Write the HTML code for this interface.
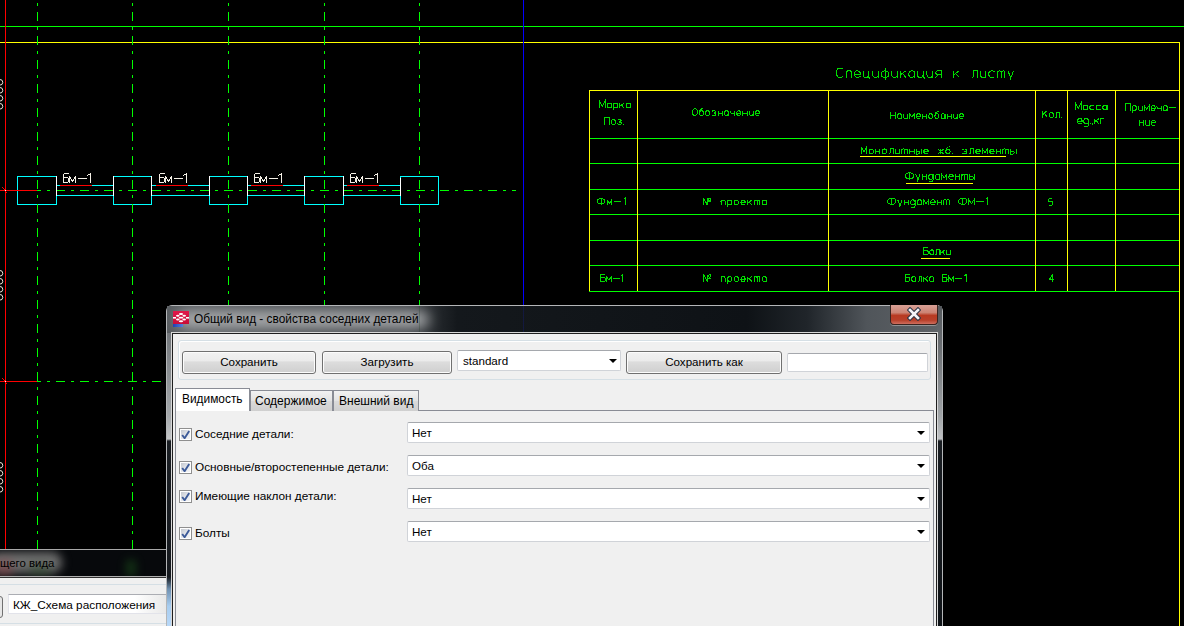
<!DOCTYPE html>
<html><head><meta charset="utf-8"><style>
html,body{margin:0;padding:0}
body{width:1184px;height:626px;background:#000;position:relative;overflow:hidden;font-family:"Liberation Sans",sans-serif;}
.a{position:absolute}
.ui{font-size:11.6px;color:#000;white-space:pre;line-height:14px}
.btn{position:absolute;box-sizing:border-box;border:1px solid #707070;border-radius:3px;
 background:linear-gradient(#f2f2f2 0%,#ebebeb 44%,#dddddd 46%,#cfcfcf 100%);box-shadow:inset 0 0 0 1px #fcfcfc;text-align:center;font-size:11.6px;line-height:20px}
.combo{position:absolute;box-sizing:border-box;border:1px solid #d0d3d8;border-top-color:#a5a8ad;border-radius:2px;background:#fff;font-size:11.6px;line-height:19px;padding-left:4px}
.arr{position:absolute;width:0;height:0;border-left:4px solid transparent;border-right:4px solid transparent;border-top:4px solid #000}
.cb{position:absolute;width:13px;height:13px;box-sizing:border-box;border:1px solid #8f8f8f;background:#fff} .cb:after{content:"";position:absolute;left:1px;top:1px;width:9px;height:9px;background:linear-gradient(135deg,#c4c8d0,#e8eaee 60%,#f4f4f4)}
</style></head><body>
<svg width="1184" height="626" style="position:absolute;left:0;top:0" shape-rendering="crispEdges"><line x1="0" y1="26.5" x2="1184" y2="26.5" stroke="#00ff00" /><line x1="0" y1="42.5" x2="1180" y2="42.5" stroke="#ffff00" /><line x1="1179.5" y1="42" x2="1179.5" y2="626" stroke="#ffff00" /><line x1="5.5" y1="0" x2="5.5" y2="549" stroke="#ff0000" /><line x1="0" y1="190.5" x2="37" y2="190.5" stroke="#ff0000" /><line x1="0" y1="381.5" x2="37" y2="381.5" stroke="#ff0000" /><line x1="37" y1="190.5" x2="516" y2="190.5" stroke="#00ff00" stroke-dasharray="9 6 3 6" stroke-dashoffset="5"/><line x1="37" y1="381.5" x2="516" y2="381.5" stroke="#00ff00" stroke-dasharray="9 6 3 6" stroke-dashoffset="5"/><rect x="17.5" y="176.5" width="39" height="28" fill="none" stroke="#00ffff"/><rect x="113.5" y="176.5" width="38" height="28" fill="none" stroke="#00ffff"/><rect x="209.5" y="176.5" width="38" height="28" fill="none" stroke="#00ffff"/><rect x="304.5" y="176.5" width="39" height="28" fill="none" stroke="#00ffff"/><rect x="400.5" y="176.5" width="38" height="28" fill="none" stroke="#00ffff"/><line x1="57" y1="185.5" x2="113" y2="185.5" stroke="#00ffff" /><line x1="57" y1="195.5" x2="113" y2="195.5" stroke="#00ffff" /><line x1="56.5" y1="176" x2="56.5" y2="196" stroke="#ffffff" /><line x1="113.5" y1="176" x2="113.5" y2="196" stroke="#ffffff" /><line x1="60" y1="185.5" x2="92" y2="185.5" stroke="#ff0000" /><line x1="152" y1="185.5" x2="209" y2="185.5" stroke="#00ffff" /><line x1="152" y1="195.5" x2="209" y2="195.5" stroke="#00ffff" /><line x1="151.5" y1="176" x2="151.5" y2="196" stroke="#ffffff" /><line x1="209.5" y1="176" x2="209.5" y2="196" stroke="#ffffff" /><line x1="156" y1="185.5" x2="188" y2="185.5" stroke="#ff0000" /><line x1="248" y1="185.5" x2="304" y2="185.5" stroke="#00ffff" /><line x1="248" y1="195.5" x2="304" y2="195.5" stroke="#00ffff" /><line x1="247.5" y1="176" x2="247.5" y2="196" stroke="#ffffff" /><line x1="304.5" y1="176" x2="304.5" y2="196" stroke="#ffffff" /><line x1="251" y1="185.5" x2="283" y2="185.5" stroke="#ff0000" /><line x1="344" y1="185.5" x2="400" y2="185.5" stroke="#00ffff" /><line x1="344" y1="195.5" x2="400" y2="195.5" stroke="#00ffff" /><line x1="343.5" y1="176" x2="343.5" y2="196" stroke="#ffffff" /><line x1="400.5" y1="178" x2="400.5" y2="196" stroke="#ffffff" /><line x1="347" y1="185.5" x2="379" y2="185.5" stroke="#ff0000" /><line x1="0" y1="190.5" x2="37" y2="190.5" stroke="#ff0000" /><line x1="0" y1="381.5" x2="37" y2="381.5" stroke="#ff0000" /><rect x="2" y="187" width="1" height="1" fill="#ff0000"/><rect x="3" y="188" width="1" height="1" fill="#ff0000"/><rect x="4" y="189" width="1" height="1" fill="#ff0000"/><rect x="6" y="192" width="1" height="1" fill="#ff0000"/><rect x="5" y="190" width="1" height="1" fill="#fff"/><rect x="2" y="378" width="1" height="1" fill="#ff0000"/><rect x="3" y="379" width="1" height="1" fill="#ff0000"/><rect x="4" y="380" width="1" height="1" fill="#ff0000"/><rect x="6" y="383" width="1" height="1" fill="#ff0000"/><rect x="5" y="381" width="1" height="1" fill="#fff"/><line x1="37.5" y1="0" x2="37.5" y2="626" stroke="#00ff00" stroke-dasharray="9 6 3 6" stroke-dashoffset="12"/><line x1="132.5" y1="0" x2="132.5" y2="626" stroke="#00ff00" stroke-dasharray="9 6 3 6" stroke-dashoffset="12"/><line x1="228.5" y1="0" x2="228.5" y2="626" stroke="#00ff00" stroke-dasharray="9 6 3 6" stroke-dashoffset="12"/><line x1="324.5" y1="0" x2="324.5" y2="626" stroke="#00ff00" stroke-dasharray="9 6 3 6" stroke-dashoffset="12"/><line x1="419.5" y1="0" x2="419.5" y2="626" stroke="#00ff00" stroke-dasharray="9 6 3 6" stroke-dashoffset="12"/><line x1="523.5" y1="0" x2="523.5" y2="305" stroke="#0000ff" /><line x1="589" y1="138.5" x2="1180" y2="138.5" stroke="#00ff00" /><line x1="589" y1="163.5" x2="1180" y2="163.5" stroke="#00ff00" /><line x1="589" y1="189.5" x2="1180" y2="189.5" stroke="#00ff00" /><line x1="589" y1="214.5" x2="1180" y2="214.5" stroke="#00ff00" /><line x1="589" y1="240.5" x2="1180" y2="240.5" stroke="#00ff00" /><line x1="589" y1="265.5" x2="1180" y2="265.5" stroke="#00ff00" /><line x1="589" y1="291.5" x2="1180" y2="291.5" stroke="#00ff00" /><line x1="589" y1="90.5" x2="1180" y2="90.5" stroke="#ffff00" /><line x1="589.5" y1="90" x2="589.5" y2="291" stroke="#ffff00" /><line x1="637.5" y1="90" x2="637.5" y2="291" stroke="#ffff00" /><line x1="828.5" y1="90" x2="828.5" y2="291" stroke="#ffff00" /><line x1="1035.5" y1="90" x2="1035.5" y2="291" stroke="#ffff00" /><line x1="1067.5" y1="90" x2="1067.5" y2="291" stroke="#ffff00" /><line x1="1115.5" y1="90" x2="1115.5" y2="291" stroke="#ffff00" /><line x1="1179.5" y1="90" x2="1179.5" y2="626" stroke="#ffff00" /><line x1="860" y1="156.5" x2="1006" y2="156.5" stroke="#ffff00" /><line x1="906" y1="183.5" x2="973" y2="183.5" stroke="#ffff00" /><line x1="921" y1="258.5" x2="950" y2="258.5" stroke="#ffff00" /><g font-family="Liberation Sans, sans-serif" shape-rendering="auto"><path d="M63.5,173.5 V182.5 H66.5 C68,182.5 68.5,181.5 68.5,180 C68.5,178.5 68,177.5 66.5,177.5 H63.5 M63.5,173.5 H68.5 M69.5,182.5 V176.5 L72.5,181.5 L75.5,176.5 V182.5 M77.5,178.5 H86.5 M87.5,175.5 L90.5,173.5 V182.5" fill="none" stroke="#f4f0e6" stroke-width="1" shape-rendering="crispEdges"/><path d="M159.5,173.5 V182.5 H162.5 C164,182.5 164.5,181.5 164.5,180 C164.5,178.5 164,177.5 162.5,177.5 H159.5 M159.5,173.5 H164.5 M165.5,182.5 V176.5 L168.5,181.5 L171.5,176.5 V182.5 M173.5,178.5 H182.5 M183.5,175.5 L186.5,173.5 V182.5" fill="none" stroke="#f4f0e6" stroke-width="1" shape-rendering="crispEdges"/><path d="M254.5,173.5 V182.5 H257.5 C259,182.5 259.5,181.5 259.5,180 C259.5,178.5 259,177.5 257.5,177.5 H254.5 M254.5,173.5 H259.5 M260.5,182.5 V176.5 L263.5,181.5 L266.5,176.5 V182.5 M268.5,178.5 H277.5 M278.5,175.5 L281.5,173.5 V182.5" fill="none" stroke="#f4f0e6" stroke-width="1" shape-rendering="crispEdges"/><path d="M350.5,173.5 V182.5 H353.5 C355,182.5 355.5,181.5 355.5,180 C355.5,178.5 355,177.5 353.5,177.5 H350.5 M350.5,173.5 H355.5 M356.5,182.5 V176.5 L359.5,181.5 L362.5,176.5 V182.5 M364.5,178.5 H373.5 M374.5,175.5 L377.5,173.5 V182.5" fill="none" stroke="#f4f0e6" stroke-width="1" shape-rendering="crispEdges"/><g transform="translate(836.5,77.5) scale(0.9500)" fill="none" stroke="#00dc00" stroke-width="1.0" shape-rendering="crispEdges"><path transform="translate(0.000,0)" d="M7,-8.6 C6.3,-9.5 5.2,-10 3.8,-10 C1.5,-10 0,-8 0,-5 C0,-2 1.5,0 3.8,0 C5.2,0 6.3,-0.5 7,-1.4" vector-effect="non-scaling-stroke"/><path transform="translate(10.017,0)" d="M0,0 V-5 C0,-6.3 1,-7 2.4,-7 H3.6 C5,-7 6,-6.3 6,-5 V0" vector-effect="non-scaling-stroke"/><path transform="translate(19.033,0)" d="M0.2,-3.5 H6 C6,-5.6 4.8,-7 3,-7 C1.2,-7 0,-5.6 0,-3.5 C0,-1.4 1.2,0 3,0 C4.4,0 5.4,-0.5 6,-1.3" vector-effect="non-scaling-stroke"/><path transform="translate(28.050,0)" d="M0,-7 V-3 C0,-1.1 1.3,0 3,0 C4.7,0 6,-1.1 6,-3 M6,-7 V0 H7 V2" vector-effect="non-scaling-stroke"/><path transform="translate(38.066,0)" d="M0,-7 V-3 C0,-1.1 1.3,0 3,0 C4.7,0 6,-1.1 6,-3 M6,-7 V0" vector-effect="non-scaling-stroke"/><path transform="translate(47.083,0)" d="M8,-3.5 A4,3.5 0 1 0 0,-3.5 A4,3.5 0 1 0 8,-3.5 M4,-10 V3" vector-effect="non-scaling-stroke"/><path transform="translate(58.100,0)" d="M0,-7 V-3 C0,-1.1 1.3,0 3,0 C4.7,0 6,-1.1 6,-3 M6,-7 V0" vector-effect="non-scaling-stroke"/><path transform="translate(67.116,0)" d="M0,-7 V0 M6,-7 L0,-2.8 M2.2,-4.3 L6,0" vector-effect="non-scaling-stroke"/><path transform="translate(76.133,0)" d="M6,-3.5 A3,3.5 0 1 0 0,-3.5 A3,3.5 0 1 0 6,-3.5 M6,-7 V0" vector-effect="non-scaling-stroke"/><path transform="translate(85.150,0)" d="M0,-7 V-3 C0,-1.1 1.3,0 3,0 C4.7,0 6,-1.1 6,-3 M6,-7 V0 H7 V2" vector-effect="non-scaling-stroke"/><path transform="translate(95.166,0)" d="M0,-7 V-3 C0,-1.1 1.3,0 3,0 C4.7,0 6,-1.1 6,-3 M6,-7 V0" vector-effect="non-scaling-stroke"/><path transform="translate(104.183,0)" d="M6,0 V-7 H3 C1.3,-7 0.4,-6.1 0.4,-5 C0.4,-3.9 1.3,-3 3,-3 H6 M3,-3 L0,0" vector-effect="non-scaling-stroke"/><path transform="translate(123.216,0)" d="M0,-7 V0 M6,-7 L0,-2.8 M2.2,-4.3 L6,0" vector-effect="non-scaling-stroke"/><path transform="translate(142.249,0)" d="M6,0 V-7 H2 V-1.4 C2,-0.4 1.4,0 0,0" vector-effect="non-scaling-stroke"/><path transform="translate(151.266,0)" d="M0,-7 V-3 C0,-1.1 1.3,0 3,0 C4.7,0 6,-1.1 6,-3 M6,-7 V0" vector-effect="non-scaling-stroke"/><path transform="translate(160.283,0)" d="M6,-6 C5.4,-6.7 4.4,-7 3,-7 C1.2,-7 0,-5.6 0,-3.5 C0,-1.4 1.2,0 3,0 C4.4,0 5.4,-0.3 6,-1" vector-effect="non-scaling-stroke"/><path transform="translate(169.299,0)" d="M0,0 V-7 M0,-5 C0,-6.3 0.8,-7 2,-7 C3.2,-7 4,-6.3 4,-5 V0 M4,-5 C4,-6.3 4.8,-7 6,-7 C7.2,-7 8,-6.3 8,-5 V0" vector-effect="non-scaling-stroke"/><path transform="translate(180.316,0)" d="M0,-7 L3.2,0 M6,-7 L2.2,3" vector-effect="non-scaling-stroke"/></g><g transform="translate(599.5,108.0) scale(0.7000)" fill="none" stroke="#00dc00" stroke-width="1.0" shape-rendering="crispEdges"><path transform="translate(0.000,0)" d="M0,0 V-10 L4,-3 L8,-10 V0" vector-effect="non-scaling-stroke"/><path transform="translate(11.071,0)" d="M6,-3.5 A3,3.5 0 1 0 0,-3.5 A3,3.5 0 1 0 6,-3.5 M6,-7 V0" vector-effect="non-scaling-stroke"/><path transform="translate(20.143,0)" d="M0,3 V-7 M6,-3.5 A3,3.5 0 1 0 0,-3.5 A3,3.5 0 1 0 6,-3.5" vector-effect="non-scaling-stroke"/><path transform="translate(29.214,0)" d="M0,-7 V0 M6,-7 L0,-2.8 M2.2,-4.3 L6,0" vector-effect="non-scaling-stroke"/><path transform="translate(38.286,0)" d="M6,-3.5 A3,3.5 0 1 0 0,-3.5 A3,3.5 0 1 0 6,-3.5 M6,-7 V0" vector-effect="non-scaling-stroke"/></g><g transform="translate(604.5,124.5) scale(0.7000)" fill="none" stroke="#00dc00" stroke-width="1.0" shape-rendering="crispEdges"><path transform="translate(0.000,0)" d="M0,0 V-10 H7 V0" vector-effect="non-scaling-stroke"/><path transform="translate(9.619,0)" d="M6,-3.5 A3,3.5 0 1 0 0,-3.5 A3,3.5 0 1 0 6,-3.5" vector-effect="non-scaling-stroke"/><path transform="translate(18.238,0)" d="M0.3,-6 C0.8,-6.7 1.8,-7 3,-7 C4.8,-7 5.6,-6.2 5.6,-5.2 C5.6,-4.1 4.6,-3.6 2.6,-3.6 C4.8,-3.6 6,-3 6,-1.8 C6,-0.6 4.8,0 3,0 C1.6,0 0.6,-0.4 0,-1.2" vector-effect="non-scaling-stroke"/><path transform="translate(26.857,0)" d="M0.5,-0.9 V0" vector-effect="non-scaling-stroke"/></g><g transform="translate(692.5,115.5) scale(0.6800)" fill="none" stroke="#00dc00" stroke-width="1.0" shape-rendering="crispEdges"><path transform="translate(0.000,0)" d="M7.0,-5 A3.5,5 0 1 0 0.0,-5 A3.5,5 0 1 0 7.0,-5" vector-effect="non-scaling-stroke"/><path transform="translate(10.153,0)" d="M6,-3.5 A3,3.5 0 1 0 0,-3.5 A3,3.5 0 1 0 6,-3.5 M0,-3.5 C0,-8.5 1.5,-10 6,-10" vector-effect="non-scaling-stroke"/><path transform="translate(19.306,0)" d="M6,-3.5 A3,3.5 0 1 0 0,-3.5 A3,3.5 0 1 0 6,-3.5" vector-effect="non-scaling-stroke"/><path transform="translate(28.459,0)" d="M0.3,-6 C0.8,-6.7 1.8,-7 3,-7 C4.8,-7 5.6,-6.2 5.6,-5.2 C5.6,-4.1 4.6,-3.6 2.6,-3.6 C4.8,-3.6 6,-3 6,-1.8 C6,-0.6 4.8,0 3,0 C1.6,0 0.6,-0.4 0,-1.2" vector-effect="non-scaling-stroke"/><path transform="translate(37.612,0)" d="M0,0 V-7 M6,0 V-7 M0,-3.5 H6" vector-effect="non-scaling-stroke"/><path transform="translate(46.765,0)" d="M6,-3.5 A3,3.5 0 1 0 0,-3.5 A3,3.5 0 1 0 6,-3.5 M6,-7 V0" vector-effect="non-scaling-stroke"/><path transform="translate(55.918,0)" d="M0,-7 V-5 C0,-3.8 1,-3 3,-3 H6 M6,-7 V0" vector-effect="non-scaling-stroke"/><path transform="translate(65.071,0)" d="M0.2,-3.5 H6 C6,-5.6 4.8,-7 3,-7 C1.2,-7 0,-5.6 0,-3.5 C0,-1.4 1.2,0 3,0 C4.4,0 5.4,-0.5 6,-1.3" vector-effect="non-scaling-stroke"/><path transform="translate(74.224,0)" d="M0,0 V-7 M6,0 V-7 M0,-3.5 H6" vector-effect="non-scaling-stroke"/><path transform="translate(83.376,0)" d="M0,-7 V-3 C0,-1.1 1.3,0 3,0 C4.7,0 6,-1.1 6,-3 M6,-7 V0" vector-effect="non-scaling-stroke"/><path transform="translate(92.529,0)" d="M0.2,-3.5 H6 C6,-5.6 4.8,-7 3,-7 C1.2,-7 0,-5.6 0,-3.5 C0,-1.4 1.2,0 3,0 C4.4,0 5.4,-0.5 6,-1.3" vector-effect="non-scaling-stroke"/></g><g transform="translate(890.5,118.5) scale(0.6800)" fill="none" stroke="#00dc00" stroke-width="1.0" shape-rendering="crispEdges"><path transform="translate(0.000,0)" d="M0,0 V-10 M7,0 V-10 M0,-5 H7" vector-effect="non-scaling-stroke"/><path transform="translate(10.032,0)" d="M6,-3.5 A3,3.5 0 1 0 0,-3.5 A3,3.5 0 1 0 6,-3.5 M6,-7 V0" vector-effect="non-scaling-stroke"/><path transform="translate(19.064,0)" d="M0,-7 V-3 C0,-1.1 1.3,0 3,0 C4.7,0 6,-1.1 6,-3 M6,-7 V0" vector-effect="non-scaling-stroke"/><path transform="translate(28.096,0)" d="M0,0 V-7 L3.5,-2 L7,-7 V0" vector-effect="non-scaling-stroke"/><path transform="translate(38.128,0)" d="M0.2,-3.5 H6 C6,-5.6 4.8,-7 3,-7 C1.2,-7 0,-5.6 0,-3.5 C0,-1.4 1.2,0 3,0 C4.4,0 5.4,-0.5 6,-1.3" vector-effect="non-scaling-stroke"/><path transform="translate(47.160,0)" d="M0,0 V-7 M6,0 V-7 M0,-3.5 H6" vector-effect="non-scaling-stroke"/><path transform="translate(56.193,0)" d="M6,-3.5 A3,3.5 0 1 0 0,-3.5 A3,3.5 0 1 0 6,-3.5" vector-effect="non-scaling-stroke"/><path transform="translate(65.225,0)" d="M6,-3.5 A3,3.5 0 1 0 0,-3.5 A3,3.5 0 1 0 6,-3.5 M0,-3.5 C0,-8.5 1.5,-10 6,-10" vector-effect="non-scaling-stroke"/><path transform="translate(74.257,0)" d="M6,-3.5 A3,3.5 0 1 0 0,-3.5 A3,3.5 0 1 0 6,-3.5 M6,-7 V0" vector-effect="non-scaling-stroke"/><path transform="translate(83.289,0)" d="M0,0 V-7 M6,0 V-7 M0,-3.5 H6" vector-effect="non-scaling-stroke"/><path transform="translate(92.321,0)" d="M0,-7 V-3 C0,-1.1 1.3,0 3,0 C4.7,0 6,-1.1 6,-3 M6,-7 V0" vector-effect="non-scaling-stroke"/><path transform="translate(101.353,0)" d="M0.2,-3.5 H6 C6,-5.6 4.8,-7 3,-7 C1.2,-7 0,-5.6 0,-3.5 C0,-1.4 1.2,0 3,0 C4.4,0 5.4,-0.5 6,-1.3" vector-effect="non-scaling-stroke"/></g><g transform="translate(1042.5,117.5) scale(0.7000)" fill="none" stroke="#00dc00" stroke-width="1.0" shape-rendering="crispEdges"><path transform="translate(0.000,0)" d="M0,-10 V0 M7,-10 L0,-3.8 M2.6,-6.1 L7,0" vector-effect="non-scaling-stroke"/><path transform="translate(9.619,0)" d="M6,-3.5 A3,3.5 0 1 0 0,-3.5 A3,3.5 0 1 0 6,-3.5" vector-effect="non-scaling-stroke"/><path transform="translate(18.238,0)" d="M6,0 V-7 H2 V-1.4 C2,-0.4 1.4,0 0,0" vector-effect="non-scaling-stroke"/><path transform="translate(26.857,0)" d="M0.5,-0.9 V0" vector-effect="non-scaling-stroke"/></g><g transform="translate(1075.5,110.0) scale(0.7000)" fill="none" stroke="#00dc00" stroke-width="1.0" shape-rendering="crispEdges"><path transform="translate(0.000,0)" d="M0,0 V-10 L4,-3 L8,-10 V0" vector-effect="non-scaling-stroke"/><path transform="translate(11.250,0)" d="M6,-3.5 A3,3.5 0 1 0 0,-3.5 A3,3.5 0 1 0 6,-3.5 M6,-7 V0" vector-effect="non-scaling-stroke"/><path transform="translate(20.500,0)" d="M6,-6 C5.4,-6.7 4.4,-7 3,-7 C1.2,-7 0,-5.6 0,-3.5 C0,-1.4 1.2,0 3,0 C4.4,0 5.4,-0.3 6,-1" vector-effect="non-scaling-stroke"/><path transform="translate(29.750,0)" d="M6,-6 C5.4,-6.7 4.4,-7 3,-7 C1.2,-7 0,-5.6 0,-3.5 C0,-1.4 1.2,0 3,0 C4.4,0 5.4,-0.3 6,-1" vector-effect="non-scaling-stroke"/><path transform="translate(39.000,0)" d="M6,-3.5 A3,3.5 0 1 0 0,-3.5 A3,3.5 0 1 0 6,-3.5 M6,-7 V0" vector-effect="non-scaling-stroke"/></g><g transform="translate(1077.5,124.0) scale(0.7857)" fill="none" stroke="#00dc00" stroke-width="1.0" shape-rendering="crispEdges"><path transform="translate(0.000,0)" d="M0.2,-3.5 H6 C6,-5.6 4.8,-7 3,-7 C1.2,-7 0,-5.6 0,-3.5 C0,-1.4 1.2,0 3,0 C4.4,0 5.4,-0.5 6,-1.3" vector-effect="non-scaling-stroke"/><path transform="translate(7.873,0)" d="M6,-3.5 A3,3.5 0 1 0 0,-3.5 A3,3.5 0 1 0 6,-3.5 M6,-7 V1 C6,2.6 5,3.2 3,3.2 C2,3.2 1,3 0.5,2.5" vector-effect="non-scaling-stroke"/><path transform="translate(15.745,0)" d="M0.5,-0.9 V0" vector-effect="non-scaling-stroke"/><path transform="translate(18.618,0)" d="M0.8,-0.8 L0,1.6" vector-effect="non-scaling-stroke"/><path transform="translate(21.491,0)" d="M0,-7 V0 M6,-7 L0,-2.8 M2.2,-4.3 L6,0" vector-effect="non-scaling-stroke"/><path transform="translate(29.364,0)" d="M0,0 V-7 H5" vector-effect="non-scaling-stroke"/></g><g transform="translate(1125.5,110.5) scale(0.7000)" fill="none" stroke="#00dc00" stroke-width="1.0" shape-rendering="crispEdges"><path transform="translate(0.000,0)" d="M0,0 V-10 H7 V0" vector-effect="non-scaling-stroke"/><path transform="translate(9.592,0)" d="M0,3 V-7 M6,-3.5 A3,3.5 0 1 0 0,-3.5 A3,3.5 0 1 0 6,-3.5" vector-effect="non-scaling-stroke"/><path transform="translate(18.184,0)" d="M0,-7 V-3 C0,-1.1 1.3,0 3,0 C4.7,0 6,-1.1 6,-3 M6,-7 V0" vector-effect="non-scaling-stroke"/><path transform="translate(26.776,0)" d="M0,0 V-7 L3.5,-2 L7,-7 V0" vector-effect="non-scaling-stroke"/><path transform="translate(36.367,0)" d="M0.2,-3.5 H6 C6,-5.6 4.8,-7 3,-7 C1.2,-7 0,-5.6 0,-3.5 C0,-1.4 1.2,0 3,0 C4.4,0 5.4,-0.5 6,-1.3" vector-effect="non-scaling-stroke"/><path transform="translate(44.959,0)" d="M0,-7 V-5 C0,-3.8 1,-3 3,-3 H6 M6,-7 V0" vector-effect="non-scaling-stroke"/><path transform="translate(53.551,0)" d="M6,-3.5 A3,3.5 0 1 0 0,-3.5 A3,3.5 0 1 0 6,-3.5 M6,-7 V0" vector-effect="non-scaling-stroke"/><path transform="translate(62.143,0)" d="M0,-4.3 H10" vector-effect="non-scaling-stroke"/></g><g transform="translate(1139.5,125.5) scale(0.7143)" fill="none" stroke="#00dc00" stroke-width="1.0" shape-rendering="crispEdges"><path transform="translate(0.000,0)" d="M0,0 V-7 M6,0 V-7 M0,-3.5 H6" vector-effect="non-scaling-stroke"/><path transform="translate(8.200,0)" d="M0,-7 V-3 C0,-1.1 1.3,0 3,0 C4.7,0 6,-1.1 6,-3 M6,-7 V0" vector-effect="non-scaling-stroke"/><path transform="translate(16.400,0)" d="M0.2,-3.5 H6 C6,-5.6 4.8,-7 3,-7 C1.2,-7 0,-5.6 0,-3.5 C0,-1.4 1.2,0 3,0 C4.4,0 5.4,-0.5 6,-1.3" vector-effect="non-scaling-stroke"/></g><g transform="translate(861.0,154.0) scale(0.7200)" fill="none" stroke="#00dc00" stroke-width="1.0" shape-rendering="crispEdges"><path transform="translate(0.000,0)" d="M0,0 V-10 L4,-3 L8,-10 V0" vector-effect="non-scaling-stroke"/><path transform="translate(11.149,0)" d="M6,-3.5 A3,3.5 0 1 0 0,-3.5 A3,3.5 0 1 0 6,-3.5" vector-effect="non-scaling-stroke"/><path transform="translate(20.298,0)" d="M0,0 V-7 M6,0 V-7 M0,-3.5 H6" vector-effect="non-scaling-stroke"/><path transform="translate(29.447,0)" d="M6,-3.5 A3,3.5 0 1 0 0,-3.5 A3,3.5 0 1 0 6,-3.5" vector-effect="non-scaling-stroke"/><path transform="translate(38.596,0)" d="M6,0 V-7 H2 V-1.4 C2,-0.4 1.4,0 0,0" vector-effect="non-scaling-stroke"/><path transform="translate(47.745,0)" d="M0,-7 V-3 C0,-1.1 1.3,0 3,0 C4.7,0 6,-1.1 6,-3 M6,-7 V0" vector-effect="non-scaling-stroke"/><path transform="translate(56.894,0)" d="M0,0 V-7 M0,-5 C0,-6.3 0.8,-7 2,-7 C3.2,-7 4,-6.3 4,-5 V0 M4,-5 C4,-6.3 4.8,-7 6,-7 C7.2,-7 8,-6.3 8,-5 V0" vector-effect="non-scaling-stroke"/><path transform="translate(68.043,0)" d="M0,0 V-7 M6,0 V-7 M0,-3.5 H6" vector-effect="non-scaling-stroke"/><path transform="translate(77.192,0)" d="M0,-7 V0 H2.5 C3.8,0 4.6,-0.8 4.6,-2 C4.6,-3.2 3.8,-4 2.5,-4 H0 M7,-7 V0" vector-effect="non-scaling-stroke"/><path transform="translate(87.341,0)" d="M0.2,-3.5 H6 C6,-5.6 4.8,-7 3,-7 C1.2,-7 0,-5.6 0,-3.5 C0,-1.4 1.2,0 3,0 C4.4,0 5.4,-0.5 6,-1.3" vector-effect="non-scaling-stroke"/><path transform="translate(106.639,0)" d="M0,-7 L8,0 M8,-7 L0,0 M4,-7 V0" vector-effect="non-scaling-stroke"/><path transform="translate(117.788,0)" d="M6,-3.5 A3,3.5 0 1 0 0,-3.5 A3,3.5 0 1 0 6,-3.5 M0,-3.5 C0,-8.5 1.5,-10 6,-10" vector-effect="non-scaling-stroke"/><path transform="translate(126.937,0)" d="M0.5,-0.9 V0" vector-effect="non-scaling-stroke"/><path transform="translate(141.235,0)" d="M0,-6 C0.6,-6.7 1.6,-7 3,-7 C4.8,-7 6,-5.6 6,-3.5 C6,-1.4 4.8,0 3,0 C1.6,0 0.6,-0.3 0,-1 M1.6,-3.5 H6" vector-effect="non-scaling-stroke"/><path transform="translate(150.384,0)" d="M6,0 V-7 H2 V-1.4 C2,-0.4 1.4,0 0,0" vector-effect="non-scaling-stroke"/><path transform="translate(159.533,0)" d="M0.2,-3.5 H6 C6,-5.6 4.8,-7 3,-7 C1.2,-7 0,-5.6 0,-3.5 C0,-1.4 1.2,0 3,0 C4.4,0 5.4,-0.5 6,-1.3" vector-effect="non-scaling-stroke"/><path transform="translate(168.682,0)" d="M0,0 V-7 L3.5,-2 L7,-7 V0" vector-effect="non-scaling-stroke"/><path transform="translate(178.831,0)" d="M0.2,-3.5 H6 C6,-5.6 4.8,-7 3,-7 C1.2,-7 0,-5.6 0,-3.5 C0,-1.4 1.2,0 3,0 C4.4,0 5.4,-0.5 6,-1.3" vector-effect="non-scaling-stroke"/><path transform="translate(187.980,0)" d="M0,0 V-7 M6,0 V-7 M0,-3.5 H6" vector-effect="non-scaling-stroke"/><path transform="translate(197.129,0)" d="M0,0 V-7 M0,-5 C0,-6.3 0.8,-7 2,-7 C3.2,-7 4,-6.3 4,-5 V0 M4,-5 C4,-6.3 4.8,-7 6,-7 C7.2,-7 8,-6.3 8,-5 V0" vector-effect="non-scaling-stroke"/><path transform="translate(208.278,0)" d="M0,-7 V0 H2.5 C3.8,0 4.6,-0.8 4.6,-2 C4.6,-3.2 3.8,-4 2.5,-4 H0 M7,-7 V0" vector-effect="non-scaling-stroke"/></g><g transform="translate(905.5,179.5) scale(0.7300)" fill="none" stroke="#00dc00" stroke-width="1.0" shape-rendering="crispEdges"><path transform="translate(0.000,0)" d="M11.0,-5 A5.5,4.2 0 1 0 0.0,-5 A5.5,4.2 0 1 0 11.0,-5 M5.5,-10 V0" vector-effect="non-scaling-stroke"/><path transform="translate(13.912,0)" d="M0,-7 L3.2,0 M6,-7 L2.2,3" vector-effect="non-scaling-stroke"/><path transform="translate(22.823,0)" d="M0,0 V-7 M6,0 V-7 M0,-3.5 H6" vector-effect="non-scaling-stroke"/><path transform="translate(31.735,0)" d="M6,-3.5 A3,3.5 0 1 0 0,-3.5 A3,3.5 0 1 0 6,-3.5 M6,-7 V1 C6,2.6 5,3.2 3,3.2 C2,3.2 1,3 0.5,2.5" vector-effect="non-scaling-stroke"/><path transform="translate(40.647,0)" d="M6,-3.5 A3,3.5 0 1 0 0,-3.5 A3,3.5 0 1 0 6,-3.5 M6,-7 V0" vector-effect="non-scaling-stroke"/><path transform="translate(49.559,0)" d="M0,0 V-7 L3.5,-2 L7,-7 V0" vector-effect="non-scaling-stroke"/><path transform="translate(59.470,0)" d="M0.2,-3.5 H6 C6,-5.6 4.8,-7 3,-7 C1.2,-7 0,-5.6 0,-3.5 C0,-1.4 1.2,0 3,0 C4.4,0 5.4,-0.5 6,-1.3" vector-effect="non-scaling-stroke"/><path transform="translate(68.382,0)" d="M0,0 V-7 M6,0 V-7 M0,-3.5 H6" vector-effect="non-scaling-stroke"/><path transform="translate(77.294,0)" d="M0,0 V-7 M0,-5 C0,-6.3 0.8,-7 2,-7 C3.2,-7 4,-6.3 4,-5 V0 M4,-5 C4,-6.3 4.8,-7 6,-7 C7.2,-7 8,-6.3 8,-5 V0" vector-effect="non-scaling-stroke"/><path transform="translate(88.205,0)" d="M0,-7 V0 H2.5 C3.8,0 4.6,-0.8 4.6,-2 C4.6,-3.2 3.8,-4 2.5,-4 H0 M7,-7 V0" vector-effect="non-scaling-stroke"/></g><g transform="translate(597.5,204.5) scale(0.6500)" fill="none" stroke="#00dc00" stroke-width="1.0" shape-rendering="crispEdges"><path transform="translate(0.000,0)" d="M11.0,-5 A5.5,4.2 0 1 0 0.0,-5 A5.5,4.2 0 1 0 11.0,-5 M5.5,-10 V0" vector-effect="non-scaling-stroke"/><path transform="translate(14.949,0)" d="M0,0 V-7 L3.5,-2 L7,-7 V0" vector-effect="non-scaling-stroke"/><path transform="translate(25.897,0)" d="M0,-4.3 H10" vector-effect="non-scaling-stroke"/><path transform="translate(39.846,0)" d="M0.3,-8 L3,-10 V0" vector-effect="non-scaling-stroke"/></g><g transform="translate(703.5,205.0) scale(0.7000)" fill="none" stroke="#00dc00" stroke-width="1.0" shape-rendering="crispEdges"><path transform="translate(0.000,0)" d="M0,0 V-10 L5.5,0 V-10 M10.4,-8 A1.6,1.8 0 1 0 7.200000000000001,-8 A1.6,1.8 0 1 0 10.4,-8 M7,-5 H10.6" vector-effect="non-scaling-stroke"/><path transform="translate(25.000,0)" d="M0,0 V-5 C0,-6.3 1,-7 2.4,-7 H3.6 C5,-7 6,-6.3 6,-5 V0" vector-effect="non-scaling-stroke"/><path transform="translate(34.500,0)" d="M0,3 V-7 M6,-3.5 A3,3.5 0 1 0 0,-3.5 A3,3.5 0 1 0 6,-3.5" vector-effect="non-scaling-stroke"/><path transform="translate(44.000,0)" d="M6,-3.5 A3,3.5 0 1 0 0,-3.5 A3,3.5 0 1 0 6,-3.5" vector-effect="non-scaling-stroke"/><path transform="translate(53.500,0)" d="M0.2,-3.5 H6 C6,-5.6 4.8,-7 3,-7 C1.2,-7 0,-5.6 0,-3.5 C0,-1.4 1.2,0 3,0 C4.4,0 5.4,-0.5 6,-1.3" vector-effect="non-scaling-stroke"/><path transform="translate(63.000,0)" d="M0,-7 V0 M6,-7 L0,-2.8 M2.2,-4.3 L6,0" vector-effect="non-scaling-stroke"/><path transform="translate(72.500,0)" d="M0,0 V-7 M0,-5 C0,-6.3 0.8,-7 2,-7 C3.2,-7 4,-6.3 4,-5 V0 M4,-5 C4,-6.3 4.8,-7 6,-7 C7.2,-7 8,-6.3 8,-5 V0" vector-effect="non-scaling-stroke"/><path transform="translate(84.000,0)" d="M6,-3.5 A3,3.5 0 1 0 0,-3.5 A3,3.5 0 1 0 6,-3.5 M6,-7 V0" vector-effect="non-scaling-stroke"/></g><g transform="translate(887.5,205.0) scale(0.7500)" fill="none" stroke="#00dc00" stroke-width="1.0" shape-rendering="crispEdges"><path transform="translate(0.000,0)" d="M11.0,-5 A5.5,4.2 0 1 0 0.0,-5 A5.5,4.2 0 1 0 11.0,-5 M5.5,-10 V0" vector-effect="non-scaling-stroke"/><path transform="translate(13.590,0)" d="M0,-7 L3.2,0 M6,-7 L2.2,3" vector-effect="non-scaling-stroke"/><path transform="translate(22.179,0)" d="M0,0 V-7 M6,0 V-7 M0,-3.5 H6" vector-effect="non-scaling-stroke"/><path transform="translate(30.769,0)" d="M6,-3.5 A3,3.5 0 1 0 0,-3.5 A3,3.5 0 1 0 6,-3.5 M6,-7 V1 C6,2.6 5,3.2 3,3.2 C2,3.2 1,3 0.5,2.5" vector-effect="non-scaling-stroke"/><path transform="translate(39.359,0)" d="M6,-3.5 A3,3.5 0 1 0 0,-3.5 A3,3.5 0 1 0 6,-3.5 M6,-7 V0" vector-effect="non-scaling-stroke"/><path transform="translate(47.949,0)" d="M0,0 V-7 L3.5,-2 L7,-7 V0" vector-effect="non-scaling-stroke"/><path transform="translate(57.538,0)" d="M0.2,-3.5 H6 C6,-5.6 4.8,-7 3,-7 C1.2,-7 0,-5.6 0,-3.5 C0,-1.4 1.2,0 3,0 C4.4,0 5.4,-0.5 6,-1.3" vector-effect="non-scaling-stroke"/><path transform="translate(66.128,0)" d="M0,0 V-7 M6,0 V-7 M0,-3.5 H6" vector-effect="non-scaling-stroke"/><path transform="translate(74.718,0)" d="M0,0 V-7 M0,-5 C0,-6.3 0.8,-7 2,-7 C3.2,-7 4,-6.3 4,-5 V0 M4,-5 C4,-6.3 4.8,-7 6,-7 C7.2,-7 8,-6.3 8,-5 V0" vector-effect="non-scaling-stroke"/><path transform="translate(94.897,0)" d="M11.0,-5 A5.5,4.2 0 1 0 0.0,-5 A5.5,4.2 0 1 0 11.0,-5 M5.5,-10 V0" vector-effect="non-scaling-stroke"/><path transform="translate(108.487,0)" d="M0,0 V-7 L3.5,-2 L7,-7 V0" vector-effect="non-scaling-stroke"/><path transform="translate(118.077,0)" d="M0,-4.3 H10" vector-effect="non-scaling-stroke"/><path transform="translate(130.667,0)" d="M0.3,-8 L3,-10 V0" vector-effect="non-scaling-stroke"/></g><g transform="translate(1048.5,205.5) scale(0.7000)" fill="none" stroke="#00dc00" stroke-width="1.0" shape-rendering="crispEdges"><path transform="translate(0.000,0)" d="M5.6,-10 H0.8 L0.3,-5.6 C1,-6.1 2,-6.4 3,-6.4 C4.9,-6.4 6,-5.1 6,-3.2 C6,-1.2 4.8,0 3,0 C1.7,0 0.7,-0.4 0,-1.3" vector-effect="non-scaling-stroke"/></g><g transform="translate(923.5,254.8) scale(0.7000)" fill="none" stroke="#00dc00" stroke-width="1.0" shape-rendering="crispEdges"><path transform="translate(0.000,0)" d="M7,-10 H0 V0 H4 C5.9,0 7,-1.2 7,-3 C7,-4.8 5.9,-6 4,-6 H0" vector-effect="non-scaling-stroke"/><path transform="translate(8.893,0)" d="M6,-3.5 A3,3.5 0 1 0 0,-3.5 A3,3.5 0 1 0 6,-3.5 M6,-7 V0" vector-effect="non-scaling-stroke"/><path transform="translate(16.786,0)" d="M6,0 V-7 H2 V-1.4 C2,-0.4 1.4,0 0,0" vector-effect="non-scaling-stroke"/><path transform="translate(24.679,0)" d="M0,-7 V0 M6,-7 L0,-2.8 M2.2,-4.3 L6,0" vector-effect="non-scaling-stroke"/><path transform="translate(32.571,0)" d="M0,-7 V-3 C0,-1.1 1.3,0 3,0 C4.7,0 6,-1.1 6,-3 M6,-7 V0" vector-effect="non-scaling-stroke"/></g><g transform="translate(600.5,281.5) scale(0.7000)" fill="none" stroke="#00dc00" stroke-width="1.0" shape-rendering="crispEdges"><path transform="translate(0.000,0)" d="M7,-10 H0 V0 H4 C5.9,0 7,-1.2 7,-3 C7,-4.8 5.9,-6 4,-6 H0" vector-effect="non-scaling-stroke"/><path transform="translate(8.619,0)" d="M0,0 V-7 L3.5,-2 L7,-7 V0" vector-effect="non-scaling-stroke"/><path transform="translate(17.238,0)" d="M0,-4.3 H10" vector-effect="non-scaling-stroke"/><path transform="translate(28.857,0)" d="M0.3,-8 L3,-10 V0" vector-effect="non-scaling-stroke"/></g><g transform="translate(703.5,281.5) scale(0.7000)" fill="none" stroke="#00dc00" stroke-width="1.0" shape-rendering="crispEdges"><path transform="translate(0.000,0)" d="M0,0 V-10 L5.5,0 V-10 M10.4,-8 A1.6,1.8 0 1 0 7.200000000000001,-8 A1.6,1.8 0 1 0 10.4,-8 M7,-5 H10.6" vector-effect="non-scaling-stroke"/><path transform="translate(25.000,0)" d="M0,0 V-5 C0,-6.3 1,-7 2.4,-7 H3.6 C5,-7 6,-6.3 6,-5 V0" vector-effect="non-scaling-stroke"/><path transform="translate(34.500,0)" d="M0,3 V-7 M6,-3.5 A3,3.5 0 1 0 0,-3.5 A3,3.5 0 1 0 6,-3.5" vector-effect="non-scaling-stroke"/><path transform="translate(44.000,0)" d="M6,-3.5 A3,3.5 0 1 0 0,-3.5 A3,3.5 0 1 0 6,-3.5" vector-effect="non-scaling-stroke"/><path transform="translate(53.500,0)" d="M0.2,-3.5 H6 C6,-5.6 4.8,-7 3,-7 C1.2,-7 0,-5.6 0,-3.5 C0,-1.4 1.2,0 3,0 C4.4,0 5.4,-0.5 6,-1.3" vector-effect="non-scaling-stroke"/><path transform="translate(63.000,0)" d="M0,-7 V0 M6,-7 L0,-2.8 M2.2,-4.3 L6,0" vector-effect="non-scaling-stroke"/><path transform="translate(72.500,0)" d="M0,0 V-7 M0,-5 C0,-6.3 0.8,-7 2,-7 C3.2,-7 4,-6.3 4,-5 V0 M4,-5 C4,-6.3 4.8,-7 6,-7 C7.2,-7 8,-6.3 8,-5 V0" vector-effect="non-scaling-stroke"/><path transform="translate(84.000,0)" d="M6,-3.5 A3,3.5 0 1 0 0,-3.5 A3,3.5 0 1 0 6,-3.5 M6,-7 V0" vector-effect="non-scaling-stroke"/></g><g transform="translate(905.0,281.5) scale(0.7000)" fill="none" stroke="#00dc00" stroke-width="1.0" shape-rendering="crispEdges"><path transform="translate(0.000,0)" d="M7,-10 H0 V0 H4 C5.9,0 7,-1.2 7,-3 C7,-4.8 5.9,-6 4,-6 H0" vector-effect="non-scaling-stroke"/><path transform="translate(9.508,0)" d="M6,-3.5 A3,3.5 0 1 0 0,-3.5 A3,3.5 0 1 0 6,-3.5 M6,-7 V0" vector-effect="non-scaling-stroke"/><path transform="translate(18.016,0)" d="M6,0 V-7 H2 V-1.4 C2,-0.4 1.4,0 0,0" vector-effect="non-scaling-stroke"/><path transform="translate(26.524,0)" d="M0,-7 V0 M6,-7 L0,-2.8 M2.2,-4.3 L6,0" vector-effect="non-scaling-stroke"/><path transform="translate(35.032,0)" d="M6,-3.5 A3,3.5 0 1 0 0,-3.5 A3,3.5 0 1 0 6,-3.5 M6,-7 V0" vector-effect="non-scaling-stroke"/><path transform="translate(53.048,0)" d="M7,-10 H0 V0 H4 C5.9,0 7,-1.2 7,-3 C7,-4.8 5.9,-6 4,-6 H0" vector-effect="non-scaling-stroke"/><path transform="translate(62.556,0)" d="M0,0 V-7 L3.5,-2 L7,-7 V0" vector-effect="non-scaling-stroke"/><path transform="translate(72.063,0)" d="M0,-4.3 H10" vector-effect="non-scaling-stroke"/><path transform="translate(84.571,0)" d="M0.3,-8 L3,-10 V0" vector-effect="non-scaling-stroke"/></g><g transform="translate(1049.5,281.5) scale(0.7000)" fill="none" stroke="#00dc00" stroke-width="1.0" shape-rendering="crispEdges"><path transform="translate(0.000,0)" d="M4.6,0 V-10 L0,-3 H6" vector-effect="non-scaling-stroke"/></g><ellipse cx="-0.5" cy="82.3" rx="3.3" ry="2.9" fill="none" stroke="#ece6dc" stroke-width="1"/><ellipse cx="-0.5" cy="90.3" rx="3.3" ry="2.9" fill="none" stroke="#ece6dc" stroke-width="1"/><ellipse cx="-0.5" cy="98.3" rx="3.3" ry="2.9" fill="none" stroke="#ece6dc" stroke-width="1"/><ellipse cx="-0.5" cy="106.3" rx="3.3" ry="2.9" fill="none" stroke="#ece6dc" stroke-width="1"/><ellipse cx="-0.5" cy="273.3" rx="3.3" ry="2.9" fill="none" stroke="#ece6dc" stroke-width="1"/><ellipse cx="-0.5" cy="281.3" rx="3.3" ry="2.9" fill="none" stroke="#ece6dc" stroke-width="1"/><ellipse cx="-0.5" cy="289.3" rx="3.3" ry="2.9" fill="none" stroke="#ece6dc" stroke-width="1"/><ellipse cx="-0.5" cy="297.3" rx="3.3" ry="2.9" fill="none" stroke="#ece6dc" stroke-width="1"/><ellipse cx="-0.5" cy="465.3" rx="3.3" ry="2.9" fill="none" stroke="#ece6dc" stroke-width="1"/><ellipse cx="-0.5" cy="473.3" rx="3.3" ry="2.9" fill="none" stroke="#ece6dc" stroke-width="1"/><ellipse cx="-0.5" cy="481.3" rx="3.3" ry="2.9" fill="none" stroke="#ece6dc" stroke-width="1"/><ellipse cx="-0.5" cy="489.3" rx="3.3" ry="2.9" fill="none" stroke="#ece6dc" stroke-width="1"/></g></svg>
<!-- background window bottom-left -->
<div class="a" style="left:0;top:549px;width:166px;height:77px;background:#f0f0f0">
  <div class="a" style="left:0;top:0;width:166px;height:1px;background:#a8a8a8"></div>
  <div class="a" style="left:0;top:1px;width:166px;height:26px;background:#07090c;overflow:hidden">
    <div class="a" style="left:-12px;top:2px;width:74px;height:21px;border-radius:10px;background:#6e6e6e;filter:blur(5px)"></div>
    <div class="a" style="left:-4px;top:10px;width:16px;height:16px;background:#8a3a42;filter:blur(5px);opacity:.5"></div>
    <div class="a" style="left:126px;top:10px;width:10px;height:16px;background:#1a4a1a;filter:blur(4px);opacity:.6"></div>
    <div class="a" style="left:30px;top:14px;width:20px;height:12px;background:#2a4a2a;filter:blur(5px);opacity:.5"></div>
  </div>
  <div class="a ui" style="left:0;top:7px;color:#000;font-size:11.4px">щего вида</div>
  <div class="a" style="left:0;top:27px;width:166px;height:1px;background:#b0b0b0"></div><div class="a" style="left:0;top:28px;width:166px;height:1px;background:#303030"></div>
  <div class="a" style="left:0;top:35px;width:166px;height:1px;background:#d5dfe5"></div>
  <div class="a" style="left:8px;top:45px;width:158px;height:20px;box-sizing:border-box;border:1px solid #e2e3ea;border-top-color:#abadb3;border-right:none;background:linear-gradient(90deg,#fff 80%,#e8e8e8)"></div>
  <div class="a ui" style="left:13px;top:49px;font-size:11.8px">КЖ_Схема расположения</div>
  <div class="a" style="left:-5px;top:47px;width:8px;height:22px;box-sizing:border-box;border:1px solid #707070;border-radius:3px;background:#e6e6e6"></div>
  <div class="a" style="left:0;top:74px;width:166px;height:1px;background:#d5dfe5"></div>
</div>

<!-- dialog -->
<div class="a" style="left:166px;top:305px;width:777px;height:330px;box-sizing:border-box;border:1px solid #b4b6b8;border-radius:6px 6px 0 0;background:#0d1115"></div>
<div class="a" style="left:167px;top:306px;width:5px;height:320px;background:linear-gradient(180deg,#606468 0px,#7a7e82 40px,#a4a8ab 110px,#c4c6c8 133px,#1a1e23 135px,#161a1f 271px,#6f90b0 283px,#a8cdf0 300px,#b8d8f8 320px)"></div>
<div class="a" style="left:937px;top:306px;width:5px;height:320px;background:linear-gradient(180deg,#55595d 0px,#6a6e72 40px,#a0a4a7 110px,#c0c2c4 133px,#1a1e23 135px,#101418 320px)"></div>
<div class="a" style="left:167px;top:306px;width:770px;height:27px;border-radius:5px 5px 0 0;background:linear-gradient(90deg,#585c60 0px,#55595d 40px,#3a3e42 240px,#14181c 290px,#0e1216 580px,#20252a 640px,#50555a 700px,#5e6266 770px)"></div>
<div class="a" style="left:167px;top:306px;width:770px;height:26px;overflow:hidden">
<div class="a" style="left:10px;top:5px;width:252px;height:17px;border-radius:9px;background:#adafb1;filter:blur(7px)"></div>
<div class="a" style="left:252px;top:0;width:1px;height:26px;background:#1d3a20;opacity:.25"></div>
<div class="a" style="left:356px;top:0;width:1px;height:26px;background:#141a58;opacity:.6"></div>
</div>
<div class="a ui" style="left:194px;top:312px;font-size:11.85px">Общий вид - свойства соседних деталей</div>
<!-- icon -->
<div class="a" style="left:173px;top:311px;width:16px;height:13px;background:linear-gradient(180deg,#e0184a,#c80c38)"></div>
<div class="a" style="left:173px;top:324px;width:10px;height:3px;background:linear-gradient(90deg,#2040b0,#5080e0)"></div>
<svg class="a" style="left:173px;top:311px" width="16" height="13"><g fill="#fff"><rect x="0" y="6" width="3" height="1.6"/><rect x="13" y="6" width="3" height="1.6"/><ellipse cx="8" cy="3" rx="2.2" ry="1"/><ellipse cx="4.8" cy="4.8" rx="1.8" ry="1"/><ellipse cx="11.2" cy="4.8" rx="1.8" ry="1"/><ellipse cx="8" cy="6.7" rx="2.4" ry="0.9"/><ellipse cx="4.8" cy="8.5" rx="1.8" ry="1"/><ellipse cx="11.2" cy="8.5" rx="1.8" ry="1"/><ellipse cx="8" cy="10.2" rx="2.2" ry="1"/></g></svg>
<!-- close button -->
<div class="a" style="left:890px;top:305px;width:48px;height:20px;box-sizing:border-box;border:1px solid #3a2420;border-top:none;border-radius:0 0 4px 4px;background:linear-gradient(180deg,#d8a096 0%,#cc8474 40%,#b83a22 55%,#b8402a 80%,#cf6e5e 100%);box-shadow:0 1px 0 rgba(200,200,200,0.5)"></div>
<svg class="a" style="left:907px;top:307px" width="14" height="14"><path d="M3 3 L11 11 M11 3 L3 11" stroke="#2e3444" stroke-width="4.6" stroke-linecap="square"/><path d="M3 3 L11 11 M11 3 L3 11" stroke="#f4f4f8" stroke-width="2.6" stroke-linecap="square"/></svg>

<!-- client area -->
<div class="a" style="left:171px;top:332px;width:767px;height:300px;background:#d8d8d8"></div>
<div class="a" style="left:172px;top:333px;width:765px;height:300px;background:#1e1e1e"></div>
<div class="a" style="left:173px;top:334px;width:763px;height:300px;background:#f0f0f0"></div>

<!-- toolbar group -->
<div class="a" style="left:178px;top:340px;width:753px;height:40px;box-sizing:border-box;border:1px solid #d5dfe5;border-radius:3px;box-shadow:inset 1px 1px 0 #fff"></div>
<div class="btn" style="left:182px;top:351px;width:134px;height:23px">Сохранить</div>
<div class="btn" style="left:322px;top:351px;width:130px;height:23px">Загрузить</div>
<div class="combo" style="left:457px;top:350px;width:164px;height:21px;padding-left:5px">standard</div>
<div class="arr" style="left:609px;top:359px"></div>
<div class="btn" style="left:626px;top:351px;width:156px;height:23px">Сохранить как</div>
<div class="combo" style="left:787px;top:353px;width:141px;height:19px"></div>

<!-- tabs -->
<div class="a" style="left:175px;top:410px;width:759px;height:230px;box-sizing:border-box;border:1px solid #898c95;border-bottom:none;background:#f0f0f0"></div>
<div class="a" style="left:250px;top:390px;width:83px;height:21px;box-sizing:border-box;border:1px solid #898c95;border-bottom:none;background:linear-gradient(#f2f2f2,#e3e3e3 50%,#dadada 51%,#cfcfcf)"></div>
<div class="a" style="left:333px;top:390px;width:86px;height:21px;box-sizing:border-box;border:1px solid #898c95;border-bottom:none;background:linear-gradient(#f2f2f2,#e3e3e3 50%,#dadada 51%,#cfcfcf)"></div>
<div class="a" style="left:175px;top:388px;width:75px;height:23px;box-sizing:border-box;border:1px solid #898c95;border-bottom:none;background:#fff"></div>
<div class="a ui" style="left:182px;top:392px;font-size:11.9px">Видимость</div>
<div class="a ui" style="left:255px;top:394px;font-size:12px">Содержимое</div>
<div class="a ui" style="left:339px;top:394px;font-size:12px">Внешний вид</div>

<!-- rows -->
<div class="cb" style="left:179px;top:428px"></div><svg class="a" style="left:181px;top:430px" width="9" height="9"><path d="M1.2 5 L3.6 8.2 L8.2 1" stroke="#3c5a98" stroke-width="1.9" fill="none"/></svg><div class="a ui" style="left:195px;top:427px;font-size:11.8px">Соседние детали:</div><div class="combo" style="left:407px;top:422px;width:523px;height:21px">Нет</div><div class="arr" style="left:917px;top:431px"></div><div class="cb" style="left:179px;top:461px"></div><svg class="a" style="left:181px;top:463px" width="9" height="9"><path d="M1.2 5 L3.6 8.2 L8.2 1" stroke="#3c5a98" stroke-width="1.9" fill="none"/></svg><div class="a ui" style="left:195px;top:460px;font-size:11.8px">Основные/второстепенные детали:</div><div class="combo" style="left:407px;top:455px;width:523px;height:21px">Оба</div><div class="arr" style="left:917px;top:464px"></div><div class="cb" style="left:179px;top:490px"></div><svg class="a" style="left:181px;top:492px" width="9" height="9"><path d="M1.2 5 L3.6 8.2 L8.2 1" stroke="#3c5a98" stroke-width="1.9" fill="none"/></svg><div class="a ui" style="left:195px;top:489px;font-size:11.8px">Имеющие наклон детали:</div><div class="combo" style="left:407px;top:488px;width:523px;height:21px">Нет</div><div class="arr" style="left:917px;top:497px"></div><div class="cb" style="left:179px;top:527px"></div><svg class="a" style="left:181px;top:529px" width="9" height="9"><path d="M1.2 5 L3.6 8.2 L8.2 1" stroke="#3c5a98" stroke-width="1.9" fill="none"/></svg><div class="a ui" style="left:195px;top:526px;font-size:11.8px">Болты</div><div class="combo" style="left:407px;top:521px;width:523px;height:21px">Нет</div><div class="arr" style="left:917px;top:530px"></div></body></html>
